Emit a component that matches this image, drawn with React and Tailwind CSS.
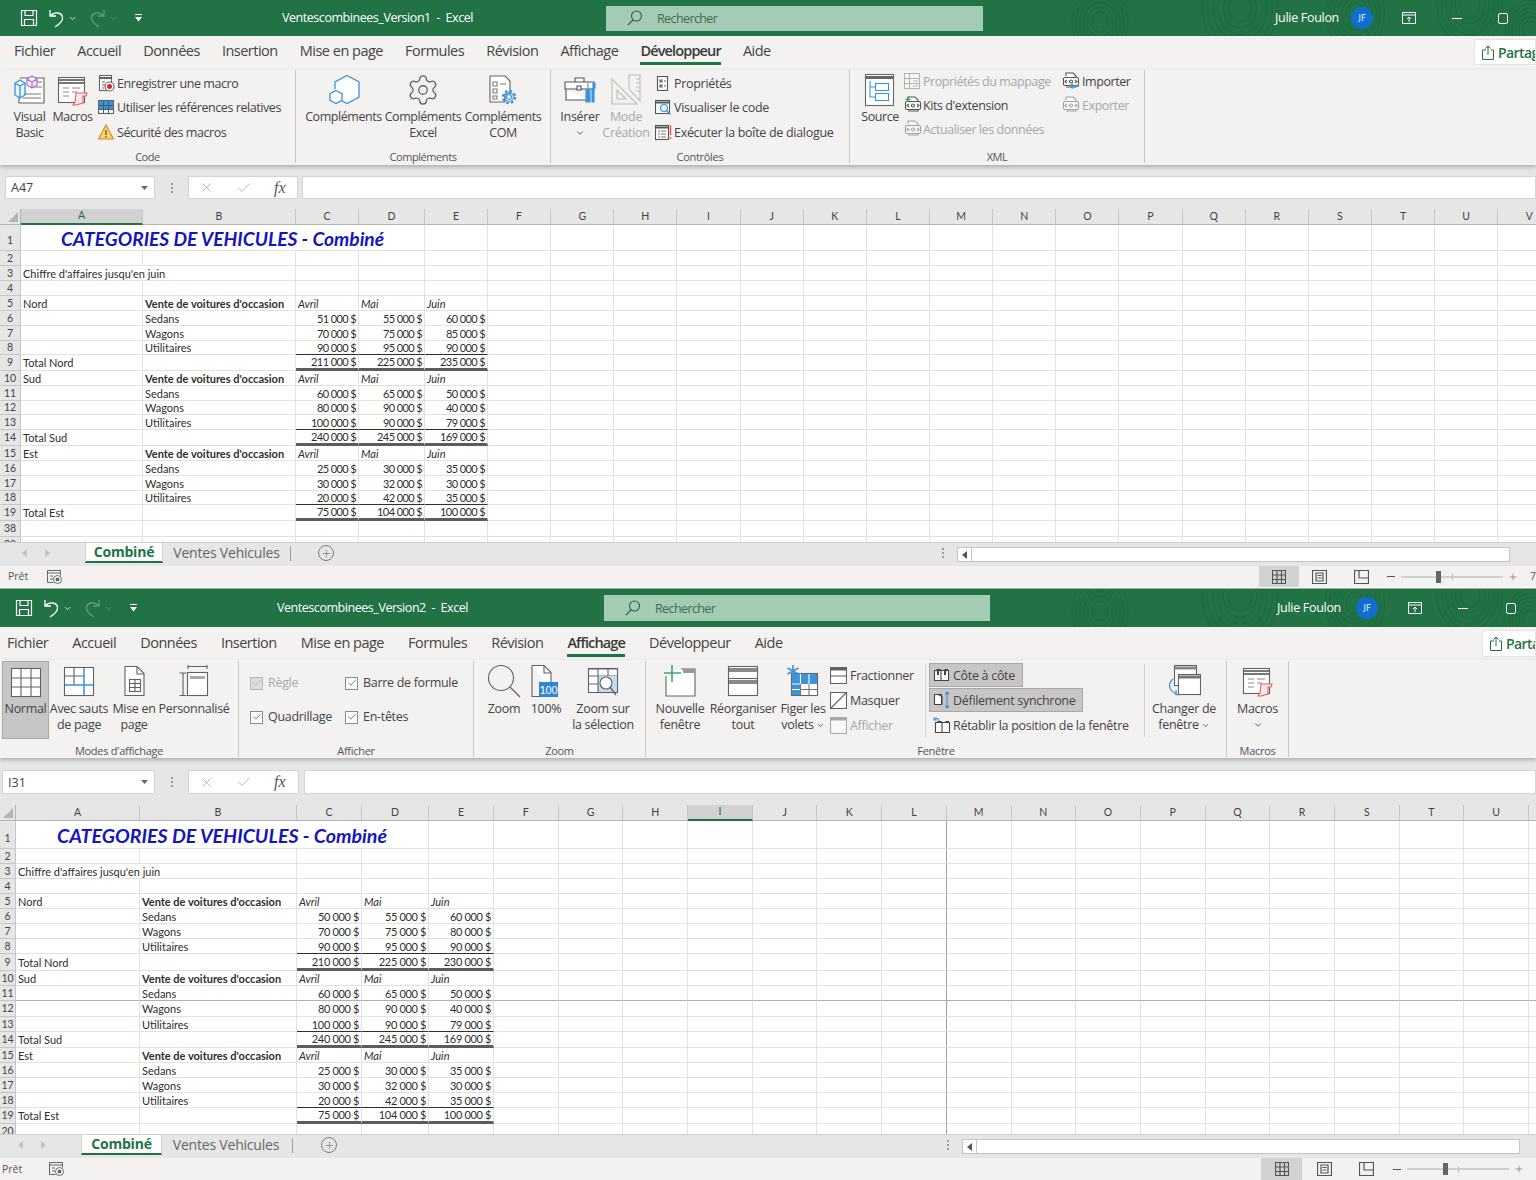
import { Check, ChevronDown, Plus, Settings, X } from "lucide-react";
import clsx from "clsx";

const GRAY = "#626262";
const BLUE = "#3b93d9";
const RED = "#ea5b5e";
const COLUMNS = "ABCDEFGHIJKLMNOPQRSTUV".split("");

function Svg({ size = 32, box = 32, className, children }) {
  return (
    <svg width={size} height={size} viewBox={`0 0 ${box} ${box}`} fill="none" stroke={GRAY} strokeWidth="1.100" className={clsx("shrink-0", className)}>
      {children}
    </svg>
  );
}

/* ---- ribbon icons ---- */
const VisualBasicIcon = () => (
  <Svg>
    <path d="M6 4h24v25H5V16" fill="#fff" />
    <path d="M16 8h12M16 13h12M9 20h18M9 24h18" stroke="#777" />
    <path d="M1 9l5-3 5 3v12l-5 3-5-3zM1 9l5 3 5-3M6 12v12" stroke={BLUE} fill="#e8f3fb" strokeWidth="1.300" />
    <path d="M13 5l5-3 5 3v6l-5 3-5-3zM13 5l5 3 5-3M18 8v6" stroke="#b468d6" fill="#f6eefb" strokeWidth="1.200" />
  </Svg>
);
const MacrosIcon = () => (
  <Svg>
    <rect x="1.5" y="3.5" width="26" height="25" fill="#fff" />
    <path d="M2 6h25M2 9h25" stroke="#777" strokeWidth="2" />
    <path d="M6 14h6M15 14h8M6 18h6M15 18h5M6 22h6" stroke="#8a8a8a" />
    <path d="M19 19h11l-1 3h-3v7l-7 2h-3l2-3z" stroke={RED} fill="#fde9e9" />
  </Svg>
);
const RecordIcon = () => (
  <Svg size={17} box={17}>
    <rect x="1.5" y="0.5" width="12" height="15" fill="#fff" />
    <path d="M2 3h11" strokeWidth="2" />
    <path d="M4 7h3M4 10h3M4 13h2" />
    <circle cx="11.5" cy="11.5" r="4.5" fill="#fff" />
    <circle cx="11.5" cy="11.5" r="2.5" fill="#d8262c" stroke="none" />
  </Svg>
);
const RelativeIcon = () => (
  <Svg size={17} box={17}>
    <rect x="0.5" y="1.5" width="15" height="13" fill="#fff" />
    <path d="M1 2h14v8H1z" fill={BLUE} stroke="none" />
    <path d="M5.500 2v12M10.500 2v12M1 6.500h14M1 10.500h14" stroke="#3d5f7a" />
  </Svg>
);
const WarnIcon = () => (
  <Svg size={17} box={17}>
    <path d="M8 1l7.500 14H.5z" fill="#fbd27a" stroke="#d8871c" />
    <path d="M8 6v5M8 12v1.500" stroke="#7a4a10" strokeWidth="1.300" />
  </Svg>
);
const HexIcon = () => (
  <Svg>
    <path d="M7 15V8L19 1.500 31 8v15l-12 6.500-5-2.500" stroke={BLUE} strokeWidth="1.300" fill="#fff" />
    <path d="M8 16.500l6 3.200v6.600l-6 3.200-6-3.200v-6.600z" stroke={BLUE} strokeWidth="1.300" fill="#fff" />
  </Svg>
);
const ComIcon = () => (
  <Svg>
    <path d="M3 2h15l5 5v13h-5v8H3z" fill="#fff" />
    <path d="M6 8h4v4H6zM6 15h4v4H6zM6 22h4v3H6zM13 10h6" stroke="#777" />
    <circle cx="22" cy="23" r="2.500" stroke={BLUE} />
    <circle cx="22" cy="23" r="6" stroke={BLUE} strokeWidth="2.400" strokeDasharray="2.500 2.200" />
    <circle cx="22" cy="23" r="4.500" stroke={BLUE} />
  </Svg>
);
const InsertIcon = () => (
  <Svg>
    <path d="M11 8V4h9v4M1 8h29v7H1zM2 15v11h21" fill="#fff" stroke="#555" />
    <rect x="13" y="12" width="4" height="4" fill="#fff" stroke="#555" />
    <path d="M24 9v7h-2v12h4V16h-2" stroke={BLUE} fill={BLUE} />
    <path d="M29 9v5l-1 1v13h2V15l1-1V9" stroke={BLUE} fill={BLUE} />
  </Svg>
);
const ModeIcon = () => (
  <Svg>
    <path d="M2 5l0 25h25zM7 16l0 9h9z" stroke="#8a8a8a" />
    <path d="M19 1h11v26l-11-12z" stroke="#8a8a8a" />
    <path d="M26 5h4M26 9h4M26 13h4M26 17h4" stroke="#8a8a8a" />
  </Svg>
);
const PropsIcon = () => (
  <Svg size={15} box={15}>
    <rect x="2.500" y="0.500" width="10" height="14" fill="#fff" stroke="#555" />
    <path d="M5 4h2v2H5zM5 9h2v2H5zM9 5h2M9 10h2" stroke="#555" />
  </Svg>
);
const ViewCodeIcon = () => (
  <Svg size={17} box={17}>
    <rect x="0.500" y="1.500" width="14" height="13" fill="#fff" stroke="#555" />
    <path d="M1 3.500h13" stroke="#555" strokeWidth="2" />
    <circle cx="9" cy="9" r="3.500" stroke={BLUE} fill="#e6f2fb" />
    <path d="M11.500 11.500l4 4" stroke={BLUE} strokeWidth="1.500" />
  </Svg>
);
const RunDialogIcon = () => (
  <Svg size={17} box={17}>
    <rect x="0.500" y="1.500" width="13" height="14" fill="#fff" stroke="#555" />
    <path d="M1 3.500h12" stroke="#555" strokeWidth="2" />
    <path d="M3 7h2M6 7h5M3 10h2M6 10h5M3 13h2M6 13h5" stroke="#777" />
    <path d="M15.500 1v10M15.500 13v2" stroke={RED} strokeWidth="1.500" />
  </Svg>
);
const SourceIcon = () => (
  <Svg size={34} box={34}>
    <rect x="2.500" y="1.500" width="28" height="31" fill="#fff" stroke="#666" />
    <path d="M3 4.500h27" stroke="#666" strokeWidth="3" />
    <rect x="12.500" y="10.500" width="13" height="7" stroke={BLUE} />
    <rect x="12.500" y="20.500" width="13" height="7" stroke={BLUE} />
    <path d="M7 8v16h5M7 14h5" stroke={BLUE} />
  </Svg>
);
const MapIcon = () => (
  <Svg size={17} box={17}>
    <rect x="0.500" y="0.500" width="15" height="15" fill="#fff" stroke="#777" />
    <path d="M1 5.500h14M1 10.500h14M5.500 1v14" stroke="#777" />
    <path d="M9 8h5M9 13h5" stroke="#777" />
  </Svg>
);
function XmlDoc({ accent }) {
  return (
    <Svg size={18} box={18}>
      <path d="M4 4V1h7l3 3v11H4" fill="#fff" stroke="#555" />
      <rect x="1.500" y="5.500" width="15" height="8" rx="1.500" fill="#fff" stroke="#555" />
      <path d="M5 8l-2 1.500L5 11M13 8l2 1.500L13 11" stroke="#555" />
      <circle cx="9" cy="9.500" r="1.500" stroke="#555" />
      {accent}
    </Svg>
  );
}

const NormalIcon = () => (
  <Svg>
    <rect x="1.500" y="2.500" width="29" height="28" fill="#fff" />
    <path d="M11 3v27M21 3v27M2 12h28M2 21h28" />
  </Svg>
);
const BreaksIcon = () => (
  <Svg>
    <rect x="1.500" y="2.500" width="29" height="28" fill="#fff" />
    <path d="M11 3v17M2 11h19" />
    <path d="M21 3v27M2 20h28" stroke={BLUE} strokeWidth="1.500" />
  </Svg>
);
const PageIcon = () => (
  <Svg>
    <path d="M7 1.500h12l7 7v22H7z" fill="#fff" />
    <path d="M19 2v7h7" />
    <rect x="11.500" y="14.500" width="11" height="12" />
    <path d="M12 18.500h10M12 22.500h10M17 15v11" />
  </Svg>
);
const CustomIcon = () => (
  <Svg>
    <path d="M10 1.500h19M10 0v4M29 0v4" />
    <rect x="9.500" y="7.500" width="20" height="23" fill="#fff" />
    <rect x="12" y="11" width="15" height="3" fill="#aaa" stroke="none" />
    <path d="M1.500 8h7M1.500 30.500h7M5 8v22.500" />
  </Svg>
);
const ZoomIcon = () => (
  <Svg size={34} box={34}>
    <circle cx="14" cy="14" r="12.500" />
    <path d="M23 23l10 10" strokeWidth="1.300" />
  </Svg>
);
const HundredIcon = () => (
  <Svg size={34} box={34}>
    <path d="M3 1.500h12l7 7v18" fill="#fff" />
    <path d="M3 1.500v31h7M15 2v7h7" />
    <rect x="10" y="18" width="19" height="15" fill="#2e86d1" stroke="none" />
    <text x="19.500" y="29.500" fontSize="11" fill="#fff" stroke="none" textAnchor="middle" fontFamily="Liberation Sans, sans-serif">100</text>
  </Svg>
);
const ZoomSelIcon = () => (
  <Svg>
    <rect x="1.500" y="3.500" width="29" height="24" fill="#fff" />
    <path d="M1.500 4h29v7h-29z" stroke="#666" />
    <path d="M11 11h19v16H11z" fill="#bfdcf3" stroke="none" />
    <path d="M11 4v24M21 4v7M2 19h9" />
    <circle cx="19" cy="18" r="6" fill="#fff" />
    <path d="M23 22l6 8" strokeWidth="1.300" />
  </Svg>
);
const NewWindowIcon = () => (
  <Svg>
    <path d="M2 11v20h29V4H17" fill="#fff" />
    <path d="M19 4h12v4H19z" fill="#9a9a9a" stroke="none" />
    <path d="M8 0v17M0 8h17" stroke="#43a66a" strokeWidth="1.600" />
  </Svg>
);
const ArrangeIcon = () => (
  <Svg>
    <rect x="1.500" y="1.500" width="29" height="29" fill="#fff" />
    <path d="M2 5h28M2 17h28" stroke="#888" strokeWidth="4" />
    <path d="M2 13.500h28" />
  </Svg>
);
const FreezeIcon = () => (
  <Svg>
    <rect x="4.500" y="8.500" width="26" height="22" fill="#fff" stroke="#666" />
    <path d="M5 9h25v10H5zM5 19h8v11H5z" fill={BLUE} stroke="none" />
    <path d="M13.500 9v10M22 9v10M5 19h8M5 24.500h8" stroke="#fff" />
    <path d="M22 19v11M13.500 19v11M14 24.500h16" stroke="#777" />
    <path d="M6 0v12M0.500 3l11 6M11.500 3l-11 6" stroke={BLUE} strokeWidth="1.600" />
  </Svg>
);
const SplitIcon = () => (
  <Svg size={17} box={17}>
    <rect x="0.500" y="0.500" width="16" height="16" fill="#fff" />
    <path d="M1 2h15" strokeWidth="3" />
    <path d="M1 9h15" />
  </Svg>
);
const HideIcon = () => (
  <Svg size={17} box={17}>
    <rect x="0.500" y="0.500" width="16" height="16" fill="#fff" />
    <path d="M1 16L16 1" />
  </Svg>
);
const UnhideIcon = () => (
  <Svg size={17} box={17}>
    <rect x="0.500" y="0.500" width="16" height="16" fill="#fff" />
    <path d="M1 2h15" strokeWidth="3" />
  </Svg>
);
const Pages = () => (
  <>
    <path d="M1.500 3.500h6.500v10H1.500zM8 3.500h7.500v10H8z" fill="#fff" stroke="#444" />
    <path d="M4 3.500v-1h3l1 1M12 3.500v-1h3" stroke="#444" />
  </>
);
const SideIcon = () => (
  <Svg size={17} box={17}>
    <Pages />
    <path d="M5 4v4M12 4v4" stroke="#444" strokeWidth="2" />
  </Svg>
);
const SyncIcon = () => (
  <Svg size={18} box={18}>
    <path d="M1.500 3.500h7v10h-7z" fill="#fff" stroke="#444" />
    <path d="M5 3.500l4 2v8" stroke="#444" />
    <path d="M14 1v16M12 3l2-2 2 2M12 15l2 2 2-2" stroke={BLUE} strokeWidth="1.200" />
  </Svg>
);
const ResetIcon = () => (
  <Svg size={18} box={18}>
    <g transform="translate(1 2)">
      <Pages />
    </g>
    <path d="M6 4C6 1 3 1 2 2M1 0v3h3" stroke={BLUE} />
  </Svg>
);
const SwitchIcon = () => (
  <Svg size={34} box={34}>
    <rect x="7.500" y="1.500" width="22" height="20" fill="#fff" />
    <path d="M8 4h21" stroke="#888" strokeWidth="3" />
    <rect x="11.500" y="10.500" width="22" height="20" fill="#fff" />
    <path d="M12 13h21" stroke="#777" strokeWidth="3" />
    <path d="M6 15c-5 4-5 11 3 15M9 26v4.500h4" stroke={BLUE} strokeWidth="1.300" />
  </Svg>
);

/* ---- ribbon parts ---- */
function Group({ label, className, children }) {
  return (
    <div className={clsx("flex h-full shrink-0 flex-col border-r border-[#c9c7c5]", className)}>
      <div className="flex min-h-0 flex-1">{children}</div>
      <div className="h-[13px] text-center text-[11px] leading-[13px] text-[#555]">{label}</div>
    </div>
  );
}

function Big({ icon, lines, className, iconClass = "h-[39px]", disabled, chevron, active }) {
  return (
    <div
      className={clsx(
        "flex shrink-0 flex-col items-center whitespace-nowrap text-center text-[12.5px] leading-[16px]",
        disabled ? "text-[#a8a8a8]" : "text-[#444]",
        active && "border border-[#a9a7a5] bg-[#c8c6c4]",
        className
      )}
    >
      <div className={clsx("flex items-center justify-center", iconClass, disabled && "opacity-50")}>{icon}</div>
      {lines.map((line) => (
        <div key={line}>{line}</div>
      ))}
      {chevron && <ChevronDown size={10} className="mt-[3px]" />}
    </div>
  );
}

function Small({ icon, text, disabled, className, on, iconWidth = "w-[19px]" }) {
  return (
    <div
      className={clsx(
        "flex shrink-0 items-center whitespace-nowrap text-[12.5px]",
        disabled ? "text-[#a8a8a8]" : "text-[#444]",
        on && "border border-[#a9a7a5] bg-[#c8c6c4]",
        className
      )}
    >
      <span className={clsx("flex shrink-0 items-center", iconWidth, disabled && "opacity-50")}>{icon}</span>
      <span className="pt-[2px]">{text}</span>
    </div>
  );
}

function Tick({ label, disabled, className }) {
  return (
    <div className={clsx("flex items-center gap-[5px] whitespace-nowrap text-[12.5px]", disabled ? "text-[#a8a8a8]" : "text-[#444]", className)}>
      <span className={clsx("flex h-[13px] w-[13px] items-center justify-center border", disabled ? "border-[#b5b5b5] bg-[#dcdcdc]" : "border-[#8a8a8a] bg-white")}>
        <Check size={10} strokeWidth={1.6} color={disabled ? "#999" : "#333"} />
      </span>
      <span className="pt-px">{label}</span>
    </div>
  );
}

function DevRibbon() {
  return (
    <div className="relative z-10 flex h-[95px] bg-[#f3f2f1] pb-[2px] tracking-[-0.43px] shadow-[0_2px_4px_rgba(0,0,0,0.25)]">
      <Group label="Code" className="w-[296px]">
        <Big className="ml-[9px] w-[41px]" icon={<VisualBasicIcon />} lines={["Visual", "Basic"]} />
        <Big className="w-[45px]" icon={<MacrosIcon />} lines={["Macros"]} />
        <div className="ml-[3px] flex flex-col pt-[1px]">
          <Small className="h-[24.5px]" icon={<RecordIcon />} text="Enregistrer une macro" />
          <Small className="h-[24.5px]" icon={<RelativeIcon />} text="Utiliser les références relatives" />
          <Small className="h-[24.5px]" icon={<WarnIcon />} text="Sécurité des macros" />
        </div>
      </Group>
      <Group label="Compléments" className="w-[255px]">
        <Big className="ml-[8px] w-[79px]" icon={<HexIcon />} lines={["Compléments"]} />
        <Big className="w-[80px]" icon={<Settings size={34} strokeWidth={0.9} color={GRAY} />} lines={["Compléments", "Excel"]} />
        <Big className="w-[80px]" icon={<ComIcon />} lines={["Compléments", "COM"]} />
      </Group>
      <Group label="Contrôles" className="w-[299px] tracking-[-0.3px]">
        <Big className="ml-[7px] w-[44px]" icon={<InsertIcon />} lines={["Insérer"]} chevron />
        <Big className="w-[48px]" icon={<ModeIcon />} lines={["Mode", "Création"]} disabled />
        <div className="ml-[5px] flex flex-col pt-[1px]">
          <Small className="h-[24.5px]" icon={<PropsIcon />} text="Propriétés" />
          <Small className="h-[24.5px]" icon={<ViewCodeIcon />} text="Visualiser le code" />
          <Small className="h-[24.5px]" icon={<RunDialogIcon />} text="Exécuter la boîte de dialogue" />
        </div>
      </Group>
      <Group label="XML" className="w-[295px]">
        <Big className="ml-[10px] w-[40px]" icon={<SourceIcon />} lines={["Source"]} />
        <div className="-mt-px ml-[4px] flex w-[158px] flex-col">
          <Small className="h-[24px]" icon={<MapIcon />} text="Propriétés du mappage" disabled />
          <Small className="h-[24px]" icon={<XmlDoc accent={<path d="M4 1v5M1.500 3.500h5" stroke="#3fa35e" strokeWidth="1.300" />} />} text="Kits d'extension" />
          <Small className="h-[24px]" icon={<XmlDoc />} text="Actualiser les données" disabled />
        </div>
        <div className="-mt-px flex flex-col">
          <Small className="h-[24px]" iconWidth="w-[20px]" icon={<XmlDoc accent={<path d="M17 14H8M11 11.500L8 14l3 2.500" stroke={BLUE} strokeWidth="1.300" />} />} text="Importer" />
          <Small className="h-[24px]" iconWidth="w-[20px]" icon={<XmlDoc />} text="Exporter" disabled />
        </div>
      </Group>
    </div>
  );
}

function ViewRibbon() {
  return (
    <div className="relative z-10 flex h-[98px] bg-[#f3f2f1] pb-[1px] pt-px tracking-[-0.3px] shadow-[0_2px_4px_rgba(0,0,0,0.25)]">
      <Group label="Modes d'affichage" className="w-[239px]">
        <Big className="ml-[2px] h-[78px] w-[47px]" iconClass="h-[39px] pt-[1px]" icon={<NormalIcon />} lines={["Normal"]} active />
        <Big className="w-[60px]" iconClass="h-[40px]" icon={<BreaksIcon />} lines={["Avec sauts", "de page"]} />
        <Big className="w-[50px]" iconClass="h-[40px]" icon={<PageIcon />} lines={["Mise en", "page"]} />
        <Big className="w-[70px]" iconClass="h-[40px]" icon={<CustomIcon />} lines={["Personnalisé"]} />
      </Group>
      <Group label="Afficher" className="w-[235px]">
        <div className="grid h-[73px] grid-cols-[95px_auto] grid-rows-2 items-center pl-[11px] pt-[5px]">
          <Tick label="Règle" disabled />
          <Tick label="Barre de formule" />
          <Tick label="Quadrillage" />
          <Tick label="En-têtes" />
        </div>
      </Group>
      <Group label="Zoom" className="w-[172px]">
        <Big className="ml-[8px] w-[44px]" iconClass="h-[40px]" icon={<ZoomIcon />} lines={["Zoom"]} />
        <Big className="w-[40px]" iconClass="h-[40px]" icon={<HundredIcon />} lines={["100%"]} />
        <Big className="ml-[4px] w-[66px]" iconClass="h-[40px]" icon={<ZoomSelIcon />} lines={["Zoom sur", "la sélection"]} />
      </Group>
      <Group label="Fenêtre" className="w-[581px]">
        <Big className="ml-[5px] w-[58px]" iconClass="h-[40px]" icon={<NewWindowIcon />} lines={["Nouvelle", "fenêtre"]} />
        <Big className="w-[68px]" iconClass="h-[40px]" icon={<ArrangeIcon />} lines={["Réorganiser", "tout"]} />
        <div className="w-[52px] shrink-0">
          <Big className="w-full" iconClass="h-[40px]" icon={<FreezeIcon />} lines={["Figer les"]} />
          <div className="flex items-center justify-center text-[12.5px] leading-[16px] text-[#444]">
            volets <ChevronDown size={9} className="ml-[2px]" />
          </div>
        </div>
        <div className="ml-[1px] flex w-[95px] flex-col pt-[2px]">
          <Small className="h-[25px]" iconWidth="w-[20px]" icon={<SplitIcon />} text="Fractionner" />
          <Small className="h-[25px]" iconWidth="w-[20px]" icon={<HideIcon />} text="Masquer" />
          <Small className="h-[25px]" iconWidth="w-[20px]" icon={<UnhideIcon />} text="Afficher" disabled />
        </div>
        <div className="my-[3px] mb-[7px] w-px bg-[#d5d3d1]" />
        <div className="ml-[3px] flex w-[215px] flex-col items-start pt-[2px]">
          <Small className="h-[24px] pl-[3px] pr-[7px]" iconWidth="w-[20px]" on icon={<SideIcon />} text="Côte à côte" />
          <Small className="mt-[1px] h-[24px] pl-[3px] pr-[7px]" iconWidth="w-[20px]" on icon={<SyncIcon />} text="Défilement synchrone" />
          <Small className="mt-px h-[25px] pl-[4px]" iconWidth="w-[20px]" icon={<ResetIcon />} text="Rétablir la position de la fenêtre" />
        </div>
        <div className="my-[3px] mb-[7px] w-px bg-[#d5d3d1]" />
        <div className="w-[78px] shrink-0">
          <Big className="w-full" iconClass="h-[40px]" icon={<SwitchIcon />} lines={["Changer de"]} />
          <div className="flex items-center justify-center text-[12.5px] leading-[16px] text-[#444]">
            fenêtre <ChevronDown size={9} className="ml-[2px]" />
          </div>
        </div>
      </Group>
      <Group label="Macros" className="w-[62px]">
        <Big className="w-full" iconClass="h-[40px]" icon={<MacrosIcon />} lines={["Macros"]} chevron />
      </Group>
    </div>
  );
}

/* ---- title bar ---- */
function WoodGrain() {
  const knots = [
    [1100, 22, 34],
    [1240, 8, 46],
    [1355, 14, 36],
    [1470, 6, 40],
    [1530, 30, 30],
  ];
  return (
    <svg className="absolute inset-0 h-full w-full" fill="none" stroke="#1e6a40" strokeWidth="1.200">
      {knots.map(([x, y, r]) =>
        [1, 0.86, 0.72, 0.58, 0.44, 0.3].map((k) => <ellipse key={`${x}-${k}`} cx={x} cy={y} rx={r * k * 0.82} ry={r * k} />)
      )}
    </svg>
  );
}

function TitleBar({ title, qatClass, titleClass, searchClass, gapClass, userClass, restoreClass, minClass, maxClass, heightClass }) {
  return (
    <div className={clsx("relative flex items-center overflow-hidden bg-[#217346] text-white", heightClass)}>
      <WoodGrain />
      <div className={clsx("relative flex shrink-0 items-center", qatClass)}>
        <svg width="18" height="18" viewBox="0 0 18 18" fill="none" stroke="#fff" strokeWidth="1.200">
          <path d="M1.500 1.500h15v15h-15zM5 1.500v5h8v-5M4.500 16.500v-6h9v6" />
        </svg>
        <svg width="17" height="20" viewBox="0 0 17 20" fill="none" stroke="#fff" strokeWidth="1.300" className="ml-[10px]">
          <path d="M2 2v6h6M2.500 8C6 3.500 14 4 14.500 9.500 15 13.500 11 16.500 7 19" />
        </svg>
        <ChevronDown size={9} strokeWidth={2} className="ml-[3px]" />
        <svg width="17" height="20" viewBox="0 0 17 20" fill="none" stroke="#5f9c7b" strokeWidth="1.300" className="ml-[12px]">
          <path d="M15 2v6H9M14.500 8C11 3.500 3 4 2.500 9.500 2 13.500 6 16.500 10 19" />
        </svg>
        <ChevronDown size={9} color="#5f9c7b" className="ml-[3px]" />
        <svg width="9" height="10" viewBox="0 0 9 10" className="ml-[16px]" fill="#fff">
          <path d="M1 1h7v1H1zM1 4h7L4.500 8.500z" />
        </svg>
      </div>
      <div className={clsx("relative shrink-0 whitespace-pre pt-px text-[12.5px] tracking-[-0.45px]", titleClass)}>{title}</div>
      <div className={clsx("relative flex shrink-0 items-center bg-[#a2cdb4] pl-[21px] text-[12.5px] tracking-[-0.6px] text-[#3f6b53]", searchClass)}>
        <svg width="16" height="16" viewBox="0 0 16 16" fill="none" stroke="#2f5c45" strokeWidth="1.100" className="mr-[14px]">
          <circle cx="9.500" cy="6" r="5" />
          <path d="M6 10l-5 5" />
        </svg>
        <span className="pt-[2px]">Rechercher</span>
      </div>
      <div className={clsx("relative shrink-0 whitespace-nowrap pt-px text-[12.5px] tracking-[-0.3px]", gapClass, userClass)}>Julie Foulon</div>
      <div className="relative flex h-[22px] w-[22px] shrink-0 items-center justify-center rounded-full bg-[#0f6fd0] text-[9px]">JF</div>
      <div className={clsx("relative flex w-[24px] shrink-0 justify-center", restoreClass)}>
        <svg width="14" height="12" viewBox="0 0 14 12" fill="none" stroke="#fff">
          <path d="M.5 .5h13v11H.5zM1 3h12M7 10V5M5 7l2-2 2 2" />
        </svg>
      </div>
      <div className={clsx("relative flex w-[24px] shrink-0 justify-center", minClass)}>
        <div className="h-px w-[10px] bg-white" />
      </div>
      <div className={clsx("relative flex w-[24px] shrink-0 justify-center", maxClass)}>
        <div className="h-[11px] w-[10px] rounded-[2px] border border-white" />
      </div>
    </div>
  );
}

/* ---- tabs ---- */
function TabRow({ tabs, active, className, shareClass }) {
  return (
    <div className={clsx("flex overflow-hidden bg-[#f3f2f1] pt-[3px]", className)}>
      {tabs.map((tab) => (
        <div
          key={tab}
          className={clsx(
            "flex shrink-0 items-center whitespace-nowrap border-b-[3px] pt-[1px] text-[14.5px]",
            tab === active ? "border-[#217346] font-semibold tracking-[-0.85px] text-[#3a3a3a]" : "border-transparent tracking-[-0.5px] text-[#444]"
          )}
        >
          {tab}
        </div>
      ))}
      <div className={clsx("ml-auto flex shrink-0 items-center overflow-hidden rounded-l-[2px] border border-[#e4e3e2] bg-white pl-[7px] text-[14px] font-semibold tracking-[-0.6px] text-[#217346]", shareClass)}>
        <svg width="12" height="15" viewBox="0 0 12 15" fill="none" stroke="#217346" className="mr-[4px] shrink-0">
          <path d="M4 5H.5v9.500h11V5H9M6 10V1M3.500 3.500L6 1l2.500 2.500" />
        </svg>
        Partager
      </div>
    </div>
  );
}

/* ---- formula bar ---- */
function FormulaBar({ name, className, rowClass, nameClass, fxClass, inputClass }) {
  return (
    <div className={clsx("bg-[#e6e6e6]", className)}>
      <div className={clsx("flex items-stretch", rowClass)}>
        <div className={clsx("flex shrink-0 items-center justify-between border border-[#d4d4d4] bg-white pl-[5px] pr-[6px] text-[12.5px] text-[#444]", nameClass)}>
          <span className="pt-[2px]">{name}</span>
          <svg width="7" height="4" viewBox="0 0 7 4" fill="#666">
            <path d="M0 0h7L3.500 4z" />
          </svg>
        </div>
        <div className="flex w-[33px] shrink-0 flex-col items-center justify-center gap-[2px]">
          <span className="h-[2px] w-[2px] bg-[#9a9a9a]" />
          <span className="h-[2px] w-[2px] bg-[#9a9a9a]" />
          <span className="h-[2px] w-[2px] bg-[#9a9a9a]" />
        </div>
        <div className={clsx("flex shrink-0 items-center border border-[#d4d4d4] bg-white pl-[10px]", fxClass)}>
          <X size={15} strokeWidth={1.3} color="#a8a8a8" />
          <Check size={16} strokeWidth={1.3} color="#a8a8a8" className="ml-[22px]" />
          <span className="ml-[22px] font-['Liberation_Serif',serif] text-[16px] italic text-[#555]">fx</span>
        </div>
        <div className={clsx("flex-1 border border-[#d4d4d4] bg-white", inputClass)} />
      </div>
    </div>
  );
}

/* ---- sheet ---- */
function buildRows(nord, total) {
  const block = (label, [a, b, c], sum) => [
    { A: label, B: "Vente de voitures d'occasion", C: "Avril", D: "Mai", E: "Juin", head: true },
    { B: "Sedans", C: a[0], D: a[1], E: a[2], num: true },
    { B: "Wagons", C: b[0], D: b[1], E: b[2], num: true },
    { B: "Utilitaires", C: c[0], D: c[1], E: c[2], num: true, beforeTotal: true },
    { A: `Total ${label}`, C: sum[0], D: sum[1], E: sum[2], num: true, total: true },
  ];
  return [
    { title: true },
    {},
    { A: "Chiffre d'affaires jusqu'en juin", spill: true },
    {},
    ...block("Nord", nord, total),
    ...block("Sud", [["60 000 $", "65 000 $", "50 000 $"], ["80 000 $", "90 000 $", "40 000 $"], ["100 000 $", "90 000 $", "79 000 $"]], ["240 000 $", "245 000 $", "169 000 $"]),
    ...block("Est", [["25 000 $", "30 000 $", "35 000 $"], ["30 000 $", "32 000 $", "30 000 $"], ["20 000 $", "42 000 $", "35 000 $"]], ["75 000 $", "104 000 $", "100 000 $"]),
    {},
    {},
  ];
}

function Sheet({ rows, labels, selected, gridClass, heightClass, titleClass, moneyClass, splitCol, splitRow }) {
  return (
    <div className={clsx("overflow-hidden bg-white font-['Lato',sans-serif] text-[11px] text-[#2e2e2e]", heightClass)}>
      <div className={clsx("grid w-max", gridClass)}>
        <div className="flex items-end justify-end border-b border-r border-[#b5b5b5] bg-[#e6e6e6] p-[2px]">
          <svg width="10" height="10" viewBox="0 0 10 10" fill="#b4b4b4">
            <path d="M10 0v10H0z" />
          </svg>
        </div>
        {COLUMNS.map((col) => (
          <div
            key={col}
            className={clsx(
              "flex items-center justify-center border-r border-r-[#c6c6c6] text-[10.5px]",
              col === selected ? "border-b-2 border-b-[#217346] bg-[#d2d2d2] text-[#1f6b41]" : "border-b border-b-[#b5b5b5] bg-[#e6e6e6] text-[#444]"
            )}
          >
            {col}
          </div>
        ))}
        {rows.map((row, r) => (
          <SheetRow key={labels[r]} row={row} label={labels[r]} titleClass={titleClass} moneyClass={moneyClass} splitCol={splitCol} split={labels[r] === splitRow} />
        ))}
      </div>
    </div>
  );
}

function bottomBorder(money, row, split) {
  if (money && row.total) return "border-b-[3px] border-b-[#5c5c5c]";
  if (money && row.beforeTotal) return "border-b border-b-[#2f2f2f]";
  return split ? "border-b border-b-[#b0b0b0]" : "border-b border-b-[#e2e2e2]";
}

function rightBorder(col, row, splitCol) {
  if (row.spill && col === "A") return "border-r border-r-transparent";
  return col === splitCol ? "border-r border-r-[#a0a0a0]" : "border-r border-r-[#e2e2e2]";
}

function SheetRow({ row, label, titleClass, moneyClass, splitCol, split }) {
  return (
    <>
      <div className={clsx("flex justify-center border-b border-r border-[#c6c6c6] bg-[#e6e6e6] text-[10.5px] text-[#444]", label === 1 ? "items-end pb-[1px]" : "items-center pt-px")}>{label}</div>
      {row.title && (
        <div className={clsx("col-span-4 flex items-center justify-center whitespace-nowrap border-r border-r-[#e2e2e2] font-bold italic text-[#1515bd]", bottomBorder(false, row, split), titleClass)}>
          CATEGORIES DE VEHICULES - Combiné
        </div>
      )}
      {COLUMNS.slice(row.title ? 4 : 0).map((col) => {
        const value = row[col];
        const money = Boolean(row.num) && "CDE".includes(col);
        const italic = row.head && "CDE".includes(col);
        const bold = row.head && col === "B";
        return (
          <div
            key={col}
            className={clsx(
              "flex items-center whitespace-nowrap px-[2px] pt-[2px]",
              bottomBorder(money, row, split),
              rightBorder(col, row, splitCol),
              money && "justify-end",
              money && moneyClass,
              italic && "italic",
              bold && "font-bold"
            )}
          >
            {value}
          </div>
        );
      })}
    </>
  );
}

/* ---- sheet tabs + status ---- */
function SheetTabs({ navClass, activeClass, otherClass, sepClass, plusClass, dotsClass, trackClass }) {
  return (
    <div className="flex h-[24px] items-stretch border-t border-[#cfcfcf] bg-[#e6e6e6]">
      <div className={clsx("mb-[3px] flex shrink-0 items-center gap-[18px]", navClass)}>
        <svg width="5" height="8" viewBox="0 0 5 8" fill="#c2c2c2"><path d="M5 0v8L0 4z" /></svg>
        <svg width="5" height="8" viewBox="0 0 5 8" fill="#c2c2c2"><path d="M0 0v8l5-4z" /></svg>
      </div>
      <div className={clsx("mb-[3px] flex shrink-0 items-center justify-center border-b-2 border-l border-r border-b-[#217346] border-l-[#d4d4d4] border-r-[#d4d4d4] bg-white pb-[2px] text-[14px] font-bold tracking-[-0.2px] text-[#217346]", activeClass)}>
        Combiné
      </div>
      <div className={clsx("mb-[3px] flex shrink-0 items-center justify-center whitespace-nowrap pb-[2px] text-[14px] tracking-[-0.2px] text-[#666]", otherClass)}>Ventes Vehicules</div>
      <div className={clsx("mb-[5px] mt-[3px] w-px shrink-0 bg-[#9d9d9d]", sepClass)} />
      <div className={clsx("mb-[3px] flex w-[16px] shrink-0 items-center justify-center", plusClass)}>
        <span className="flex h-[16px] w-[16px] items-center justify-center rounded-full border border-[#7d7d7d]">
          <Plus size={11} strokeWidth={1.3} color="#666" />
        </span>
      </div>
      <div className={clsx("mb-[3px] flex w-[5px] shrink-0 flex-col items-center justify-center gap-[2px]", dotsClass)}>
        <span className="h-[2px] w-[2px] bg-[#9a9a9a]" />
        <span className="h-[2px] w-[2px] bg-[#9a9a9a]" />
        <span className="h-[2px] w-[2px] bg-[#9a9a9a]" />
      </div>
      <div className="mb-[4px] ml-[12px] mt-[4px] flex w-[15px] shrink-0 items-center justify-center border border-[#c4c4c4] bg-white">
        <svg width="5" height="8" viewBox="0 0 5 8" fill="#555"><path d="M5 0v8L0 4z" /></svg>
      </div>
      <div className={clsx("mb-[4px] mt-[4px] shrink-0 border border-l-0 border-[#c4c4c4] bg-white", trackClass)} />
    </div>
  );
}

function StatusBar({ className, pretClass, normalClass, layoutClass, breakClass, minusClass, thumbClass, plusClass, zoomText }) {
  return (
    <div className={clsx("flex items-center bg-[#f3f2f1] text-[10.5px] text-[#555]", className)}>
      <span className={clsx("shrink-0 pt-px", pretClass)}>Prêt</span>
      <svg width="15" height="14" viewBox="0 0 15 14" fill="none" stroke="#666" className="shrink-0">
        <path d="M.5 .5h13v5M.5 .5v12h6M1 3h12" />
        <path d="M3 6h3M3 9h3" />
        <circle cx="10.500" cy="9.500" r="4" fill="#fff" />
        <circle cx="10.500" cy="9.500" r="2" fill="#666" stroke="none" />
      </svg>
      <div className="flex-1" />
      <div className={clsx("flex h-full shrink-0 items-center justify-center bg-[#d2d2d2]", normalClass)}>
        <svg width="14" height="14" viewBox="0 0 14 14" fill="none" stroke="#555" strokeWidth="1.200">
          <path d="M.5 .5h13v13H.5zM5 1v12M9.500 1v12M1 5h12M1 9.500h12" />
        </svg>
      </div>
      <div className={clsx("flex shrink-0 justify-center", layoutClass)}>
        <svg width="15" height="14" viewBox="0 0 15 14" fill="none" stroke="#555" strokeWidth="1.200">
          <path d="M.5 .5h14v13H.5zM4 3h7v8H4zM5.500 5.500h4M5.500 8h4" />
        </svg>
      </div>
      <div className={clsx("flex shrink-0 justify-center", breakClass)}>
        <svg width="15" height="14" viewBox="0 0 15 14" fill="none" stroke="#555" strokeWidth="1.200">
          <path d="M.5 .5h14v13H.5zM5 1v7h9" />
        </svg>
      </div>
      <div className={clsx("h-px w-[8px] shrink-0 bg-[#555]", minusClass)} />
      <div className="relative ml-[6px] flex h-[2px] w-[102px] shrink-0 items-center bg-[#d0d0d0]">
        <span className={clsx("absolute h-[12px] w-[5px] bg-[#666]", thumbClass)} />
        <span className="absolute left-[51px] h-[7px] w-px bg-[#bdbdbd]" />
      </div>
      <Plus size={10} strokeWidth={1.3} color="#555" className={clsx("shrink-0", plusClass)} />
      <span className={clsx("ml-[12px] shrink-0 overflow-hidden", zoomText && "w-[6px]")}>{zoomText}</span>
    </div>
  );
}

const TABS = ["Fichier", "Accueil", "Données", "Insertion", "Mise en page", "Formules", "Révision", "Affichage", "Développeur", "Aide"];

const ROWS_ONE = buildRows(
  [["51 000 $", "55 000 $", "60 000 $"], ["70 000 $", "75 000 $", "85 000 $"], ["90 000 $", "95 000 $", "90 000 $"]],
  ["211 000 $", "225 000 $", "235 000 $"]
);
const ROWS_TWO = buildRows(
  [["50 000 $", "55 000 $", "60 000 $"], ["70 000 $", "75 000 $", "80 000 $"], ["90 000 $", "95 000 $", "90 000 $"]],
  ["210 000 $", "225 000 $", "230 000 $"]
);
const LABELS_ONE = [1, 2, 3, 4, 5, 6, 7, 8, 9, 10, 11, 12, 13, 14, 15, 16, 17, 18, 19, 38, 39];
const LABELS_TWO = [1, 2, 3, 4, 5, 6, 7, 8, 9, 10, 11, 12, 13, 14, 15, 16, 17, 18, 19, 20, 21];

export default function App() {
  return (
    <div className="h-[1180px] w-[1536px] overflow-hidden bg-white font-['Open_Sans',sans-serif]">
      <div className="flex h-[589px] flex-col border-b border-[#8db49d]">
        <TitleBar
          title="Ventescombinees_Version1  -  Excel"
          heightClass="h-[36px]"
          qatClass="w-[282px] pl-[20px]"
          titleClass="w-[324px]"
          searchClass="h-[25px] w-[377px]"
          gapClass="ml-[292px]"
          userClass="w-[76px]"
          restoreClass="ml-[24px]"
          minClass="ml-[24px]"
          maxClass="ml-[22px]"
        />
        <TabRow tabs={TABS} active="Développeur" className="h-[34px] gap-[22px] pb-[5px] pl-[14px]" shareClass="w-[62px]" />
        <DevRibbon />
        <FormulaBar name="A47" className="h-[44px] pl-[5px] pt-[11px]" rowClass="h-[23px]" nameClass="w-[150px]" fxClass="w-[110px]" inputClass="ml-[4px]" />
        <Sheet
          rows={ROWS_ONE}
          labels={LABELS_ONE}
          selected="A"
          heightClass="h-[333px]"
          gridClass="grid-cols-[21px_122px_153px_63px_66px_63px_repeat(17,63.15px)] grid-rows-[16px_26px_15px_15px_15px_15px_15px_15px_14px_16px_15px_15px_14px_15px_16px_15px_15px_15px_14px_16px_16px_16px]"
          titleClass="pt-[3px] text-[19.2px]"
          moneyClass="tracking-[-0.6px]"
        />
        <SheetTabs
          navClass="w-[85px] pl-[22px]"
          activeClass="w-[78px]"
          otherClass="ml-[11px] w-[105px]"
          sepClass="ml-[11px]"
          plusClass="ml-[27px]"
          dotsClass="ml-[606px]"
          trackClass="w-[538px]"
        />
        <StatusBar
          className="h-[21px]"
          pretClass="ml-[8px] w-[39px]"
          normalClass="w-[40px]"
          layoutClass="w-[41px]"
          breakClass="w-[42px]"
          minusClass="ml-[5px]"
          thumbClass="left-[35px]"
          plusClass="ml-[5px]"
          zoomText="7"
        />
      </div>
      <div className="flex h-[591px] flex-col">
        <TitleBar
          title="Ventescombinees_Version2  -  Excel"
          heightClass="h-[38px]"
          qatClass="w-[277px] pl-[15px]"
          titleClass="w-[327px]"
          searchClass="h-[26px] w-[386px]"
          gapClass="ml-[287px]"
          userClass="w-[79px]"
          restoreClass="ml-[25px]"
          minClass="ml-[24px]"
          maxClass="ml-[24px]"
        />
        <TabRow tabs={TABS} active="Affichage" className="h-[33px] gap-[24px] pb-[3px] pl-[7px]" shareClass="w-[54px]" />
        <ViewRibbon />
        <FormulaBar name="I31" className="h-[47px] pl-[2px] pt-[12px]" rowClass="h-[24px]" nameClass="w-[153px]" fxClass="w-[111px]" inputClass="ml-[5px]" />
        <Sheet
          rows={ROWS_TWO}
          labels={LABELS_TWO}
          selected="I"
          heightClass="h-[329px]"
          gridClass="grid-cols-[16px_124px_157px_65px_67px_65px_repeat(17,64.7px)] grid-rows-[16px_28px_15px_15px_15px_15px_15px_15px_15px_17px_15px_15px_16px_15px_16px_15px_15px_15px_15px_16px_16px_16px]"
          titleClass="pt-[2px] text-[19.6px]"
          moneyClass="tracking-[-0.35px]"
          splitCol="L"
          splitRow={11}
        />
        <SheetTabs
          navClass="w-[81px] pl-[18px]"
          activeClass="w-[81px]"
          otherClass="ml-[10px] w-[108px]"
          sepClass="ml-[12px]"
          plusClass="ml-[28px]"
          dotsClass="ml-[608px]"
          trackClass="w-[543px]"
        />
        <StatusBar
          className="h-[22px]"
          pretClass="ml-[2px] w-[47px]"
          normalClass="w-[41px]"
          layoutClass="w-[44px]"
          breakClass="w-[40px]"
          minusClass="ml-[7px]"
          thumbClass="left-[36px]"
          plusClass="ml-[5px]"
        />
      </div>
    </div>
  );
}
